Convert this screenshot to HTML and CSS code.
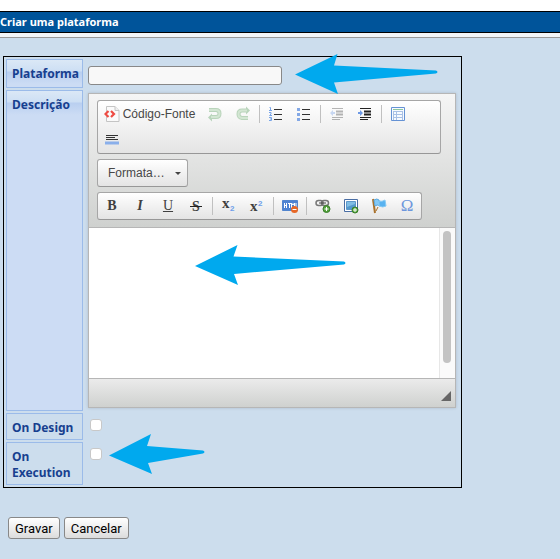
FILE: index.html
```html
<!DOCTYPE html>
<html lang="pt">
<head>
<meta charset="utf-8">
<title>Criar uma plataforma</title>
<link rel="stylesheet" href="styles.css">
</head>
<body>
<header class="page-header"><h1 class="page-title">Criar uma plataforma</h1></header>
<main class="page-main">
<form>
<table class="form-table">
<tr>
  <th class="shaded"><label for="name">Plataforma</label></th>
  <td><input class="text-input" id="name" type="text"></td>
</tr>
<tr>
  <th class="shaded"><label for="desc">Descrição</label></th>
  <td>
    <div class="editor">
      <div class="toolbar">
        <div class="group group-wide">
          <div class="tools">
            <button type="button" class="source"><svg width="16" height="16" viewBox="0 0 16 16"><path d="M2.500.5h8.500l4 4v11H2.500z" fill="#fafafa" stroke="#c4c4c4"/><path d="M11 .5v4h4" fill="#eee" stroke="#c4c4c4"/><path d="M4.500 5 1.500 8l3 3M7 5l3 3-3 3" fill="none" stroke="#ee4b43" stroke-width="2.200"/></svg><span>Código-Fonte</span></button>
            <button type="button" class="tool" aria-label="Desfazer"><svg width="16" height="16" viewBox="0 0 16 16"><path d="M2 4h7q3.500 0 3.500 3.500T9 11H5" fill="none" stroke="#b9d4bb" stroke-width="4"/><path d="M1 11.500 5 7.500v8z" fill="#b9d4bb"/><path d="M2 4h7q3.500 0 3.500 3.500T9 11H4" fill="none" stroke="#d3e6d3" stroke-width="2"/></svg></button>
            <button type="button" class="tool" aria-label="Refazer"><svg width="16" height="16" viewBox="0 0 16 16"><path d="M11 4.500H7Q3.500 4.500 3.500 8T7 12h6" fill="none" stroke="#b9d4bb" stroke-width="4"/><path d="m15 4.500-4-4v8z" fill="#b9d4bb"/><path d="M12 4.500H7Q3.500 4.500 3.500 8T7 12h6" fill="none" stroke="#d3e6d3" stroke-width="2"/></svg></button>
            <span class="sep"></span>
            <button type="button" class="tool" aria-label="Lista numerada"><svg width="16" height="16" viewBox="0 0 16 16"><path d="M1.500 1.500h1v3M1 4.500h3M1 6.500h2v1.500l-1.500 1.500H4M1 11.500h2.500v3H1M2 13h1.500" fill="none" stroke="#78a5e8"/><path d="M6 3.500h8M6 8.500h8M6 13.500h8" stroke="#333"/></svg></button>
            <button type="button" class="tool" aria-label="Marcadores"><svg width="16" height="16" viewBox="0 0 16 16"><path d="M1 2h3v3H1zM1 7h3v3H1zM1 12h3v3H1z" fill="#83a8e6"/><path d="M6 3.500h8M6 8.500h8M6 13.500h8" stroke="#333"/></svg></button>
            <span class="sep"></span>
            <button type="button" class="tool faded" aria-label="Diminuir avanço"><svg width="16" height="16" viewBox="0 0 16 16"><path d="M3 2.500h11M3 11.500h11M3 13.500h8" stroke="#333"/><path d="M7 5.500h7M7 8.500h7" stroke="#333" stroke-width="2"/><path d="m1 7 3-3v2h2v2H4v2z" fill="#6d99e5"/></svg></button>
            <button type="button" class="tool" aria-label="Aumentar avanço"><svg width="16" height="16" viewBox="0 0 16 16"><path d="M3 2.500h11M3 11.500h11M3 13.500h8" stroke="#222"/><path d="M7 5.500h7M7 8.500h7" stroke="#222" stroke-width="2"/><path d="M6 7 3 4v2H1v2h2v2z" fill="#6d99e5"/></svg></button>
            <span class="sep"></span>
            <button type="button" class="tool" aria-label="Tabela"><svg width="16" height="16" viewBox="0 0 16 16"><path d="M1.500 1.500h13v13h-13z" fill="#f7faff" stroke="#6592d4"/><path d="M3 3.500h10" stroke="#8bc79c"/><path d="M3 5.500h10M3 8.500h10M3 11.500h10M3.500 5v9M6.500 5v9M12.500 5v9" stroke="#a9c1e6"/></svg></button>
          </div>
          <div class="tools">
            <button type="button" class="tool" aria-label="Div"><svg width="16" height="16" viewBox="0 0 16 16"><path d="M1 9.500h14v3H1z" fill="#8aafea"/><path d="M2 3.500h12M2 5.500h9M2 7.500h12" stroke="#333"/></svg></button>
          </div>
        </div>
        <button type="button" class="group combo"><span>Formata…</span><svg width="6" height="3" viewBox="0 0 6 3"><path d="M0 0h6L3 3z" fill="#444"/></svg></button>
        <div class="group">
          <div class="tools">
            <button type="button" class="tool glyph"><b>B</b></button>
            <button type="button" class="tool glyph"><b><i>I</i></b></button>
            <button type="button" class="tool glyph"><u>U</u></button>
            <button type="button" class="tool glyph" aria-label="S"><svg width="20" height="20" viewBox="0 0 20 20"><text class="strike-letter" x="6" y="15">S</text><path d="M4 10.500h12" stroke="#222"/></svg></button>
            <span class="sep"></span>
            <button type="button" class="tool glyph" aria-label="Subscrito"><svg width="20" height="24" viewBox="0 0 20 24"><text class="base-letter" x="3" y="14">x</text><text class="script-number" x="11" y="17">2</text></svg></button>
            <button type="button" class="tool glyph" aria-label="Sobrescrito"><svg width="20" height="24" viewBox="0 0 20 24"><text class="base-letter" x="3" y="17">x</text><text class="script-number" x="11" y="12">2</text></svg></button>
            <span class="sep"></span>
            <button type="button" class="tool" aria-label="Remover formatação"><svg width="16" height="16" viewBox="0 0 16 16"><path d="M.5 2.500h15v10H.5z" fill="#4d82d2" stroke="#5285ce"/><path d="M2.500 5v5M4.500 5v5M2 7.500h3M6 5.500h3M7.500 5v5M9.500 10V5l1.500 2 1.500-2v5M14 5v4.500h1" fill="none" stroke="#fff"/><circle cx="12.500" cy="11.500" r="3.500" fill="#e76827"/><path d="M10.500 11.500h4" stroke="#fff"/></svg></button>
            <span class="sep"></span>
            <button type="button" class="tool" aria-label="Link"><svg width="16" height="16" viewBox="0 0 16 16"><rect x="1" y="2.500" width="7" height="5" rx="2.500" fill="none" stroke="#777" stroke-width="1.500"/><rect x="6.500" y="2.500" width="7" height="5" rx="2.500" fill="none" stroke="#777" stroke-width="1.500"/><path d="M4 5h7" stroke="#444"/><circle cx="11.500" cy="11" r="3.500" fill="#55a33d" stroke="#397e2a"/><path d="M9.500 11h4M11.500 9v4" stroke="#fff"/></svg></button>
            <button type="button" class="tool" aria-label="Imagem"><svg width="16" height="16" viewBox="0 0 16 16"><path d="M1.500 1.500h13v12h-13z" fill="#fff" stroke="#496da3"/><path d="M3.500 3.500h9v8h-9z" fill="#80bde4" stroke="#5d97c9"/><path d="M4 9 12 6v5H4z" fill="#5398cc"/><circle cx="12" cy="12" r="3" fill="#55a33d" stroke="#397e2a"/><path d="M10 12h4M12 10v4" stroke="#fff"/></svg></button>
            <button type="button" class="tool" aria-label="Âncora"><svg width="16" height="16" viewBox="0 0 16 16"><path d="m2 1 2 14" stroke="#a9712c" stroke-width="2"/><path d="M3 2q3-2 5 0l1 6q-3-2-5 0z" fill="#83c9f7" stroke="#5ba9df"/><path d="M8 3q3 1 6-1l1 6q-3 2-7 0z" fill="#58b2f0" stroke="#86caf4"/><path d="M7 9 5 13" stroke="#a9712c"/></svg></button>
            <button type="button" class="tool glyph omega">Ω</button>
          </div>
        </div>
      </div>
      <div class="content"><textarea id="desc"></textarea><div class="track"><div class="thumb"></div></div></div>
      <div class="editor-foot"><svg width="10" height="10" viewBox="0 0 10 10"><path d="M10 0v10H0z" fill="#666"/></svg></div>
    </div>
  </td>
</tr>
<tr>
  <th><label for="design">On Design</label></th>
  <td><input class="check" id="design" type="checkbox"></td>
</tr>
<tr>
  <th><label for="execution">On Execution</label></th>
  <td><input class="check" id="execution" type="checkbox"></td>
</tr>
</table>
<div class="actions"><button type="submit" class="action">Gravar</button><button type="button" class="action">Cancelar</button></div>
</form>
</main>
<svg class="arrow arrow-name" width="144" height="40" viewBox="0 0 144 40"><path d="M0 20.500 42.500 0 39 11.500 141 16.500Q144 18 141 19.500L39 28.500 43 40z"/></svg>
<svg class="arrow arrow-desc" width="151" height="40" viewBox="0 0 151 40"><path d="M0 21 42.500 0 38.500 11.500 149 16.500Q152 18 149 19.500L39 29 43 40z"/></svg>
<svg class="arrow arrow-exec" width="96" height="40" viewBox="0 0 96 40"><path d="M0 21.500 42 0 38 12 94 16.500Q97 18 94 19.500L39 29 43 40z"/></svg>
</body>
</html>
```
FILE: styles.css
```css
* { box-sizing: border-box; }
body {
  position: relative;
  margin: 0;
  padding-top: 11px;
  background: linear-gradient(#fff 11px, #ccdded 11px);
  min-height: 100vh;
  font-family: "Noto Sans", sans-serif;
}
.page-header { background: #f2f5f8; border-bottom: 1px solid #999; padding-bottom: 4px; }
.page-title {
  margin: 0;
  border: solid #000;
  border-width: 1px 0;
  background: #00549a;
  color: #fff;
  font-size: 11px;
  line-height: 20px;
}
.page-main { padding: 18px 3px 0; }
.form-table {
  width: 459px;
  max-width: 100%;
  border: 1px solid #000;
  border-spacing: 2px;
}
th {
  width: 77px;
  padding: 6px 0 3px 5px;
  border: 1px solid #9bbbe9;
  color: #173f8f;
  font-size: 12px;
  line-height: 16px;
  text-align: left;
  vertical-align: top;
}
.shaded {
  background: linear-gradient(#dbe8f6, #cddff4 11px, #b9cff0 12px, #ccdcf4 24px);
}
td { padding: 3px; vertical-align: top; }
.text-input {
  display: block;
  width: 194px;
  height: 19px;
  margin-top: 4px;
  border: 1px solid #888;
  border-radius: 3px;
  background: #f8f8f8;
}
.editor {
  border: 1px solid #b6b6b6;
  box-shadow: 0 0 3px rgba(0, 0, 0, .15);
}
.toolbar {
  display: flex;
  flex-direction: column;
  align-items: flex-start;
  gap: 5px;
  padding: 6px 8px 7px;
  border-bottom: 1px solid #b6b6b6;
  background: linear-gradient(#f5f5f5, #cfd1cf);
}
.group {
  border: 1px solid #a6a6a6;
  border-bottom-color: #979797;
  border-radius: 3px;
  background: linear-gradient(#fff, #e4e4e4);
}
.group-wide { padding-right: 28px; }
.tools { display: flex; height: 26px; align-items: center; }
.tool, .source {
  display: flex;
  align-items: center;
  justify-content: center;
  height: 26px;
  padding: 0;
  border: 0;
  background: none;
}
.tool { width: 28px; }
.source {
  gap: 3px;
  width: 103px;
  color: #474747;
  font: 12px "Liberation Sans", sans-serif;
}
.faded { opacity: .35; }
.sep { width: 1px; height: 18px; margin: 0 2px; background: #c0c0c0; }
.combo {
  display: flex;
  align-items: center;
  justify-content: space-between;
  width: 91px;
  height: 28px;
  padding: 0 6px 0 10px;
  color: #474747;
  font: 12px "Liberation Sans", sans-serif;
}
.glyph { color: #404040; font: 14px "Liberation Serif", serif; }
.glyph svg { overflow: visible; }
.strike-letter { font: bold 14px "Liberation Serif", serif; fill: #404040; }
.base-letter { font: bold 15px "Liberation Serif", serif; fill: #404040; }
.script-number { font: bold 8px "Liberation Sans", sans-serif; fill: #6d9eea; }
.omega { color: #6d96dc; font-size: 17px; }
.content { display: flex; height: 150px; background: #fff; }
textarea {
  flex: 1;
  min-width: 0;
  border: 0;
  padding: 8px;
  resize: none;
  outline: 0;
}
.track {
  width: 16px;
  padding: 3px 4px 0 3px;
  border-left: 1px solid #e7e7e7;
  background: #fafafa;
}
.thumb { height: 132px; border-radius: 4px; background: #c3c3c3; }
.editor-foot {
  display: flex;
  justify-content: flex-end;
  align-items: flex-end;
  height: 29px;
  padding: 0 4px 6px;
  border-top: 1px solid #b6b6b6;
  background: linear-gradient(#ebebeb, #cfd1cf);
}
.check {
  appearance: none;
  display: block;
  width: 12px;
  height: 12px;
  margin: 3px 2px;
  border: 1px solid #c8c8c8;
  border-radius: 3px;
  background: #fff;
}
.actions { display: flex; gap: 4px; padding: 29px 5px; }
.action {
  height: 22px;
  padding: 0 6px;
  border: 1px solid #888;
  border-radius: 3px;
  background: linear-gradient(#fff, #dcdcdc);
  color: #000;
  font: 13px Roboto, sans-serif;
}
.arrow { position: absolute; fill: #00a9ee; pointer-events: none; }
.arrow-name { left: 295px; top: 54px; }
.arrow-desc { left: 195px; top: 245px; }
.arrow-exec { left: 109px; top: 434px; }
```
